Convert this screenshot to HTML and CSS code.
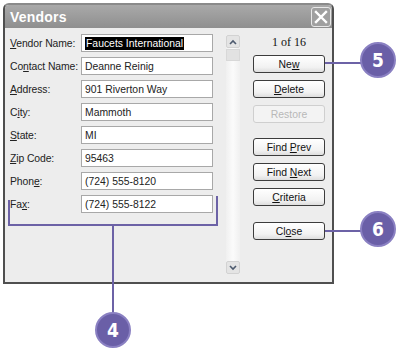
FILE: index.html
```html
<!DOCTYPE html>
<html lang="en">
<head>
    <meta charset="UTF-8">
    <title>Vendors</title>
    <link rel="stylesheet" href="styles.css">
</head>
<body>
    <div class="page">
        <div class="dialog">
            <div class="titlebar">
                <span class="title">Vendors</span>
                <span class="close-x">
                    <svg width="14" height="14" viewBox="0 0 14 14"><path d="M2 2 L12 12 M12 2 L2 12" stroke="#fff" stroke-width="2.4" stroke-linecap="square"/></svg>
                </span>
            </div>
            <div class="content">
                <div class="fields">
                    <div class="row"><label><u>V</u>endor Name:</label><div class="field"><span class="selected">Faucets International</span></div></div>
                    <div class="row"><label>Co<u>n</u>tact Name:</label><div class="field">Deanne Reinig</div></div>
                    <div class="row"><label><u>A</u>ddress:</label><div class="field">901 Riverton Way</div></div>
                    <div class="row"><label>C<u>i</u>ty:</label><div class="field">Mammoth</div></div>
                    <div class="row"><label><u>S</u>tate:</label><div class="field">MI</div></div>
                    <div class="row"><label><u>Z</u>ip Code:</label><div class="field">95463</div></div>
                    <div class="row"><label>Phon<u>e</u>:</label><div class="field">(724) 555-8120</div></div>
                    <div class="row"><label>Fa<u>x</u>:</label><div class="field">(724) 555-8122</div></div>
                </div>
                <div class="scrollbar">
                    <div class="arrow">
                        <svg width="8" height="6" viewBox="0 0 8 6"><path d="M1 5 L4 2 L7 5" fill="none" stroke="#4d5a6e" stroke-width="1.6"/></svg>
                    </div>
                    <div class="thumb"></div>
                    <div class="track"></div>
                    <div class="arrow">
                        <svg width="8" height="6" viewBox="0 0 8 6"><path d="M1 1 L4 4 L7 1" fill="none" stroke="#4d5a6e" stroke-width="1.6"/></svg>
                    </div>
                </div>
                <div class="buttons">
                    <div class="counter">1 of 16</div>
                    <button>Ne<u>w</u></button>
                    <button><u>D</u>elete</button>
                    <button class="disabled">Restore</button>
                    <button class="group-start">Find <u>P</u>rev</button>
                    <button>Find <u>N</u>ext</button>
                    <button><u>C</u>riteria</button>
                    <button class="close-btn">Cl<u>o</u>se</button>
                </div>
            </div>
        </div>

        <svg class="leaders" width="400" height="350">
            <path d="M9 200 V225 H217 V196" fill="none" stroke="#6c62a6" stroke-width="2"/>
            <path d="M113 225 V314" fill="none" stroke="#6c62a6" stroke-width="2"/>
            <path d="M325 63 H362" fill="none" stroke="#6c62a6" stroke-width="2"/>
            <path d="M325 231 H362" fill="none" stroke="#6c62a6" stroke-width="2"/>
        </svg>
        <div class="callout callout-5">5</div>
        <div class="callout callout-6">6</div>
        <div class="callout callout-4">4</div>
    </div>
</body>
</html>
```

FILE: styles.css
```css
body {
    margin: 0;
    background: #fff;
    font-family: "Liberation Sans", Arial, sans-serif;
}
.page {
    position: relative;
    width: 400px;
    height: 350px;
    overflow: hidden;
}
.dialog {
    margin: 3px 0 0 3px;
    width: 331px;
    height: 281px;
    box-sizing: border-box;
    border: 2px solid #4f4f4f;
    border-top-color: #8a8a8a;
    border-radius: 6px 6px 0 0;
    background: #ededed;
    display: flex;
    flex-direction: column;
}
.titlebar {
    height: 23px;
    background: linear-gradient(#a9a9a9, #8f8f8f);
    border-radius: 4px 4px 0 0;
    display: flex;
    align-items: center;
    justify-content: space-between;
    padding: 0 1px 0 5px;
}
.title {
    color: #fff;
    font-weight: bold;
    font-size: 14px;
    letter-spacing: 0.2px;
}
.close-x {
    width: 20px;
    height: 20px;
    box-sizing: border-box;
    border: 1px solid #e8e8e8;
    border-radius: 3px;
    background: #a0a0a0;
    display: flex;
    align-items: center;
    justify-content: center;
}
.content {
    display: flex;
    padding: 6px 0 0 5px;
    font-size: 10.4px;
    color: #222;
}
.fields {
    display: flex;
    flex-direction: column;
    gap: 5px;
}
.row {
    display: flex;
    align-items: center;
    height: 18px;
}
.row label {
    width: 71px;
    letter-spacing: -0.1px;
}
.field {
    width: 132px;
    height: 18px;
    box-sizing: border-box;
    border: 1px solid #a8a8a8;
    background: #fff;
    padding-left: 3px;
    display: flex;
    align-items: center;
}
.selected {
    background: #000;
    color: #fff;
    padding: 1px 1px;
}
.scrollbar {
    margin: 1px 0 0 13px;
    width: 14px;
    height: 239px;
    display: flex;
    flex-direction: column;
    background: linear-gradient(90deg, #f0f0f0, #fbfbfb 50%, #f0f0f0);
}
.arrow {
    height: 13px;
    background: #e4e4e4;
    border: 1px solid #d2d2d2;
    border-radius: 2px;
    box-sizing: border-box;
    display: flex;
    align-items: center;
    justify-content: center;
}
.thumb {
    height: 12px;
    margin-top: 1px;
    background: #e2e2e2;
    border: 1px solid #d8d8d8;
    box-sizing: border-box;
}
.track {
    flex: 1;
}
.buttons {
    margin-left: 13px;
    width: 72px;
    display: flex;
    flex-direction: column;
    gap: 7px;
}
.counter {
    height: 16px;
    line-height: 16px;
    text-align: center;
    font-family: "Liberation Serif", "Times New Roman", serif;
    font-size: 12px;
    color: #111;
    margin-bottom: -2px;
}
button {
    height: 18px;
    padding: 0;
    border: 1px solid #3c3c3c;
    border-radius: 3px;
    background: linear-gradient(#ffffff, #f2f2f2 70%, #dedede);
    font-family: "Liberation Sans", Arial, sans-serif;
    font-size: 10.4px;
    color: #111;
}
button.disabled {
    color: #b8b8b8;
    border-color: #cfcfcf;
    background: #f3f3f3;
}
button.group-start {
    margin-top: 8px;
}
button.close-btn {
    margin-top: 9px;
}
.leaders {
    position: absolute;
    left: 0;
    top: 0;
}
.callout {
    position: absolute;
    width: 36px;
    height: 36px;
    box-sizing: border-box;
    border-radius: 50%;
    background: #6a5fa7;
    border: 2px solid #8a80c2;
    color: #fff;
    font-family: "DejaVu Sans Condensed", "Liberation Sans", sans-serif;
    font-weight: bold;
    font-size: 19px;
    display: flex;
    align-items: center;
    justify-content: center;
}
.callout-5 {
    left: 360px;
    top: 42px;
}
.callout-6 {
    left: 360px;
    top: 211px;
}
.callout-4 {
    left: 95px;
    top: 312px;
}
```
